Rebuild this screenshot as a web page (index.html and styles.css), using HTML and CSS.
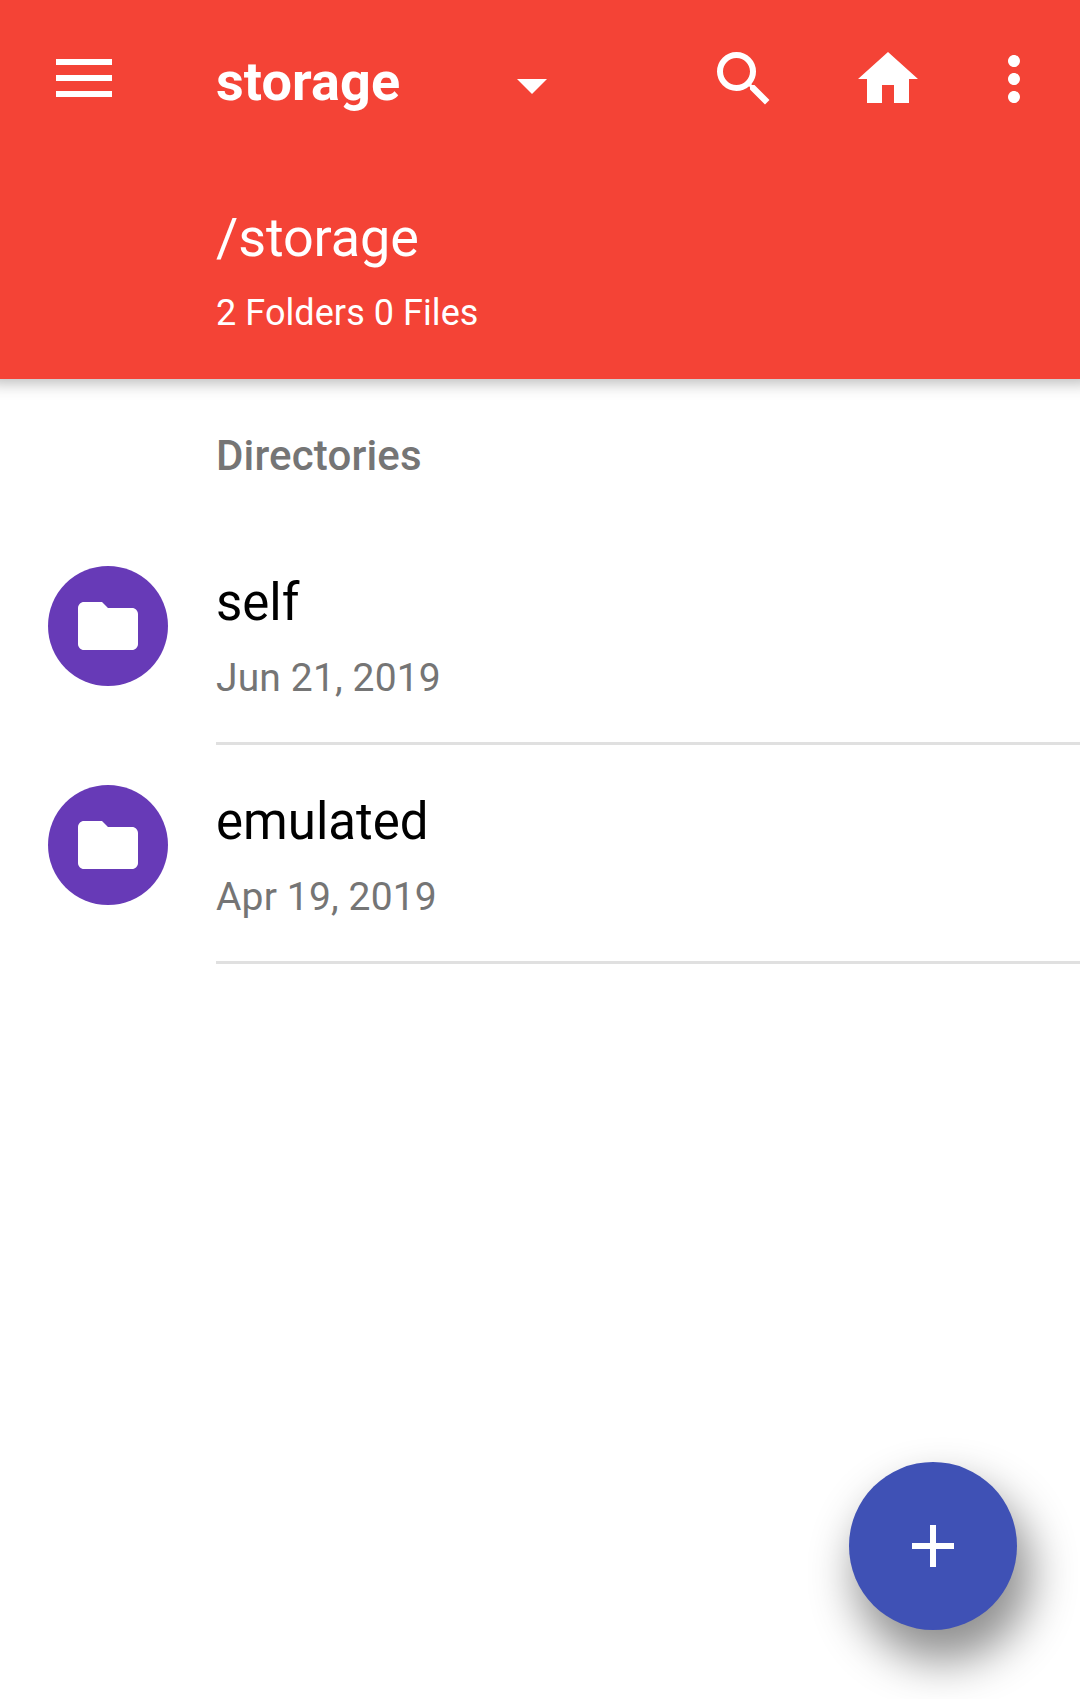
FILE: index.html
```html
<!DOCTYPE html>
<html lang="en">
<head>
<meta charset="utf-8">
<title>storage</title>
<link rel="stylesheet" href="styles.css">
</head>
<body>
<header class="appbar">
  <div class="toolbar">
    <svg class="icon menu" viewBox="0 0 72 72"><path d="M8 16h56v6H8zM8 32h56v6H8zM8 48h56v6H8z"/></svg>
    <h1 class="title">storage</h1>
    <svg class="icon caret" viewBox="0 0 24 24"><path d="M7 10l5 5 5-5z"/></svg>
    <svg class="icon search" viewBox="0 0 24 24"><path d="M15.5 14h-.79l-.28-.27A6.471 6.471 0 0 0 16 9.5 6.5 6.5 0 1 0 9.5 16c1.61 0 3.09-.59 4.23-1.57l.27.28v.79l5 4.99L20.49 19l-4.99-5zm-6 0C7.01 14 5 11.99 5 9.5S7.01 5 9.5 5 14 7.01 14 9.5 11.99 14 9.5 14z"/></svg>
    <svg class="icon home" viewBox="0 0 24 24"><path d="M10 20v-6h4v6h5v-8h3L12 3 2 12h3v8z"/></svg>
    <svg class="icon more" viewBox="0 0 24 24"><path d="M12 8c1.1 0 2-.9 2-2s-.9-2-2-2-2 .9-2 2 .9 2 2 2zm0 2c-1.1 0-2 .9-2 2s.9 2 2 2 2-.9 2-2-.9-2-2-2zm0 6c-1.1 0-2 .9-2 2s.9 2 2 2 2-.9 2-2-.9-2-2-2z"/></svg>
  </div>
  <p class="path">/storage</p>
  <p class="count">2 Folders 0 Files</p>
</header>
<main>
  <h2 class="section">Directories</h2>
  <ul class="list">
    <li class="row">
      <span class="avatar"><svg class="folder" viewBox="0 0 24 24"><path d="M10 4H4c-1.1 0-1.99.9-1.99 2L2 18c0 1.1.9 2 2 2h16c1.1 0 2-.9 2-2V8c0-1.1-.9-2-2-2h-8l-2-2z"/></svg></span>
      <div class="info"><p class="name">self</p><p class="date">Jun 21, 2019</p></div>
    </li>
    <li class="row">
      <span class="avatar"><svg class="folder" viewBox="0 0 24 24"><path d="M10 4H4c-1.1 0-1.99.9-1.99 2L2 18c0 1.1.9 2 2 2h16c1.1 0 2-.9 2-2V8c0-1.1-.9-2-2-2h-8l-2-2z"/></svg></span>
      <div class="info"><p class="name">emulated</p><p class="date">Apr 19, 2019</p></div>
    </li>
  </ul>
</main>
<button class="fab" aria-label="Add"><svg class="plus" viewBox="0 0 24 24"><path d="M19 13h-6v6h-2v-6H5v-2h6V5h2v6h6v2z"/></svg></button>
</body>
</html>
```
FILE: styles.css
```css
* { box-sizing: border-box; margin: 0; padding: 0; }
body { width: 1080px; height: 1699px; background: #fff; font-family: Roboto, sans-serif; overflow: hidden; }
.appbar { height: 379px; background: #f44336; color: #fff; box-shadow: 0 -8px 15px 12px rgba(0,0,0,.28); }
.toolbar { height: 158px; display: flex; align-items: center; padding-left: 48px; }
.icon { width: 72px; height: 72px; fill: currentColor; flex: none; }
.title { width: 184px; margin-left: 96px; font-size: 54px; line-height: 64px; font-weight: 700; margin-top: 6px; letter-spacing: .1px; }
.caret { margin-left: 96px; margin-top: 12px; }
.search { margin-left: 140px; }
.home { margin-left: 72px; }
.more { margin-left: 54px; }
.path { margin: 48px 0 0 216px; font-size: 54px; line-height: 64px; letter-spacing: -.12px; }
.count { margin: 21px 0 0 216px; font-size: 36px; line-height: 44px; letter-spacing: .07px; }
.section { margin: 53px 0 0 216px; font-size: 42px; line-height: 48px; font-weight: 500; color: #757575; letter-spacing: .15px; }
.list { list-style: none; margin-top: 46px; }
.row { height: 219px; display: flex; padding-left: 48px; }
.avatar { width: 120px; height: 120px; margin: 40px 48px 0 0; border-radius: 50%; background: #673ab7; display: grid; place-items: center; }
.folder { width: 72px; height: 72px; fill: #fff; }
.info { flex: 1; border-bottom: 3px solid #e0e0e0; padding-top: 47px; }
.name { font-size: 51px; line-height: 60px; color: #000; }
.date { margin-top: 21px; font-size: 39px; line-height: 48px; color: #757575; letter-spacing: .15px; }
.fab { position: absolute; left: 849px; top: 1462px; width: 168px; height: 168px; border: 0; border-radius: 50%; background: #3f51b5; display: grid; place-items: center; box-shadow: 10px 27px 45px 4px rgba(0,0,0,.44); }
.plus { width: 72px; height: 72px; fill: #fff; }
```
